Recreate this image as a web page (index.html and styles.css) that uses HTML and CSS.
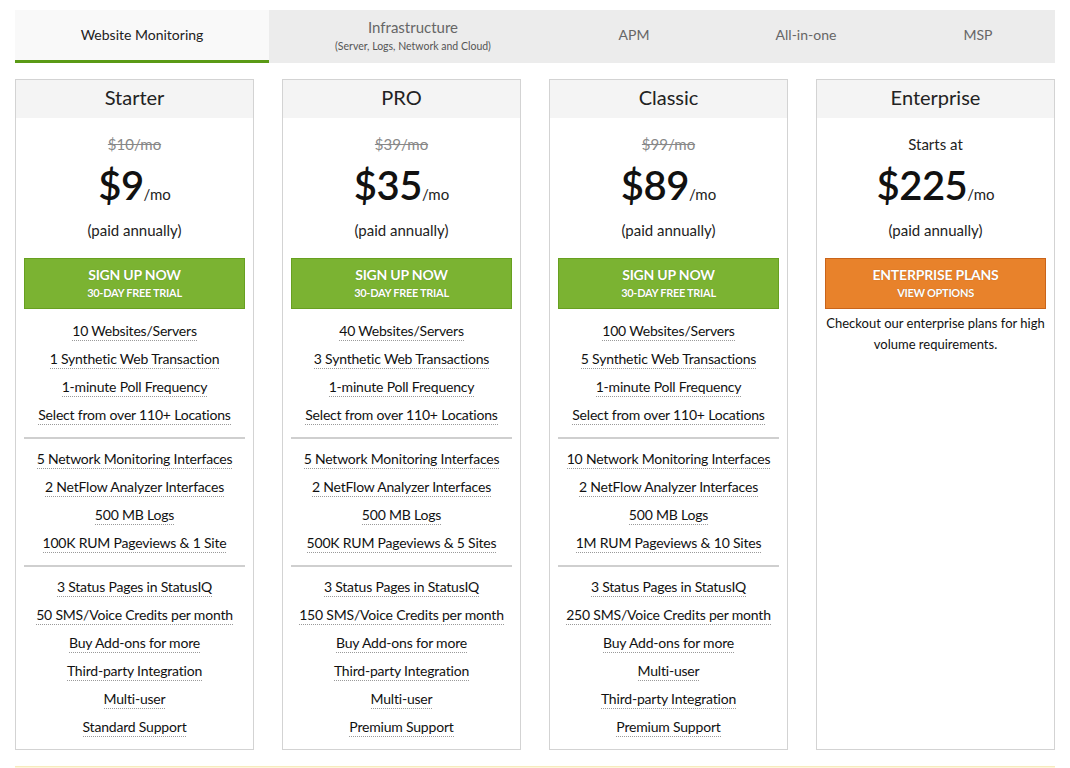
FILE: index.html
```html
<!DOCTYPE html>
<html>
<head>
<meta charset="utf-8">
<link rel="stylesheet" href="styles.css">
</head>
<body>
<div class="page">
  <nav class="tabs">
    <div class="tab active w1">Website Monitoring</div>
    <div class="tab w2"><span class="big">Infrastructure</span><small>(Server, Logs, Network and Cloud)</small></div>
    <div class="tab w3">APM</div>
    <div class="tab w4">All-in-one</div>
    <div class="tab w5">MSP</div>
  </nav>

  <div class="plans">
    <div class="card">
      <div class="card-head">Starter</div>
      <div class="card-body">
        <div class="old">$10/mo</div>
        <div class="price"><span class="amt">$9</span><span class="per">/mo</span></div>
        <div class="paid">(paid annually)</div>
        <a class="btn green"><b>SIGN UP NOW</b><span>30-DAY FREE TRIAL</span></a>
        <ul class="feats">
          <li><span>10 Websites/Servers</span></li>
          <li><span>1 Synthetic Web Transaction</span></li>
          <li><span>1-minute Poll Frequency</span></li>
          <li><span>Select from over 110+ Locations</span></li>
        </ul>
        <hr class="div">
        <ul class="feats">
          <li><span>5 Network Monitoring Interfaces</span></li>
          <li><span>2 NetFlow Analyzer Interfaces</span></li>
          <li><span>500 MB Logs</span></li>
          <li><span>100K RUM Pageviews &amp; 1 Site</span></li>
        </ul>
        <hr class="div">
        <ul class="feats">
          <li><span>3 Status Pages in StatusIQ</span></li>
          <li><span>50 SMS/Voice Credits per month</span></li>
          <li><span>Buy Add-ons for more</span></li>
          <li><span>Third-party Integration</span></li>
          <li><span class="plain">Multi-user</span></li>
          <li><span>Standard Support</span></li>
        </ul>
      </div>
    </div>

    <div class="card">
      <div class="card-head">PRO</div>
      <div class="card-body">
        <div class="old">$39/mo</div>
        <div class="price"><span class="amt">$35</span><span class="per">/mo</span></div>
        <div class="paid">(paid annually)</div>
        <a class="btn green"><b>SIGN UP NOW</b><span>30-DAY FREE TRIAL</span></a>
        <ul class="feats">
          <li><span>40 Websites/Servers</span></li>
          <li><span>3 Synthetic Web Transactions</span></li>
          <li><span>1-minute Poll Frequency</span></li>
          <li><span>Select from over 110+ Locations</span></li>
        </ul>
        <hr class="div">
        <ul class="feats">
          <li><span>5 Network Monitoring Interfaces</span></li>
          <li><span>2 NetFlow Analyzer Interfaces</span></li>
          <li><span>500 MB Logs</span></li>
          <li><span>500K RUM Pageviews &amp; 5 Sites</span></li>
        </ul>
        <hr class="div">
        <ul class="feats">
          <li><span>3 Status Pages in StatusIQ</span></li>
          <li><span>150 SMS/Voice Credits per month</span></li>
          <li><span>Buy Add-ons for more</span></li>
          <li><span>Third-party Integration</span></li>
          <li><span class="plain">Multi-user</span></li>
          <li><span>Premium Support</span></li>
        </ul>
      </div>
    </div>

    <div class="card">
      <div class="card-head">Classic</div>
      <div class="card-body">
        <div class="old">$99/mo</div>
        <div class="price"><span class="amt">$89</span><span class="per">/mo</span></div>
        <div class="paid">(paid annually)</div>
        <a class="btn green"><b>SIGN UP NOW</b><span>30-DAY FREE TRIAL</span></a>
        <ul class="feats">
          <li><span>100 Websites/Servers</span></li>
          <li><span>5 Synthetic Web Transactions</span></li>
          <li><span>1-minute Poll Frequency</span></li>
          <li><span>Select from over 110+ Locations</span></li>
        </ul>
        <hr class="div">
        <ul class="feats">
          <li><span>10 Network Monitoring Interfaces</span></li>
          <li><span>2 NetFlow Analyzer Interfaces</span></li>
          <li><span>500 MB Logs</span></li>
          <li><span>1M RUM Pageviews &amp; 10 Sites</span></li>
        </ul>
        <hr class="div">
        <ul class="feats">
          <li><span>3 Status Pages in StatusIQ</span></li>
          <li><span>250 SMS/Voice Credits per month</span></li>
          <li><span>Buy Add-ons for more</span></li>
          <li><span class="plain">Multi-user</span></li>
          <li><span>Third-party Integration</span></li>
          <li><span>Premium Support</span></li>
        </ul>
      </div>
    </div>

    <div class="card">
      <div class="card-head">Enterprise</div>
      <div class="card-body">
        <div class="starts">Starts at</div>
        <div class="price"><span class="amt">$225</span><span class="per">/mo</span></div>
        <div class="paid">(paid annually)</div>
        <a class="btn orange"><b>ENTERPRISE PLANS</b><span>VIEW OPTIONS</span></a>
        <p class="ent-note">Checkout our enterprise plans for high volume requirements.</p>
      </div>
    </div>
  </div>

  <div class="notice"></div>
</div>
</body>
</html>
```

FILE: styles.css
```css
* { box-sizing: border-box; }
html, body { margin: 0; padding: 0; background: #fff; }
body {
  font-family: Lato, "Open Sans", "Liberation Sans", sans-serif;
  color: #222;
}
.page { padding: 10px 15px 0; width: 1070px; overflow: hidden; height: 768px; }

.tabs {
  display: flex;
  height: 53px;
  background: #ececec;
}
.tab {
  display: flex;
  flex-direction: column;
  align-items: center;
  justify-content: center;
  font-size: 14px;
  color: #666;
  border-bottom: 3px solid transparent;
  line-height: 18px;
}
.tab .big { font-size: 15px; line-height: 20px; }
.tab small { font-size: 10.5px; line-height: 16px; color: #555; margin-top: 1px; }
.tab.active { background: #f9f9f9; color: #222; border-bottom-color: #5a9a16; }
.w1 { width: 254px; }
.w2 { width: 288px; }
.w3 { width: 154px; }
.w4 { width: 190px; }
.w5 { width: 154px; }

.plans {
  display: flex;
  gap: 28px;
  margin-top: 16px;
}
.card {
  width: 239px;
  height: 671px;
  border: 1px solid #d3d3d3;
  background: #fff;
}
.card-head {
  height: 38px;
  background: #f4f4f4;
  text-align: center;
  font-size: 20px;
  line-height: 35px;
  color: #222;
}
.card-body {
  padding: 0 8px;
  text-align: center;
}
.old, .starts {
  margin-top: 16px;
  font-size: 15px;
  line-height: 20px;
  color: #888;
  text-decoration: line-through;
}
.starts { color: #222; text-decoration: none; }
.price {
  margin-top: 10px;
  line-height: 42px;
  height: 44px;
}
.amt { font-size: 40px; color: #111; font-weight: 600; letter-spacing: -0.5px; }
.per { font-size: 15px; color: #222; }
.paid {
  margin-top: 12px;
  font-size: 15px;
  line-height: 20px;
}
.btn {
  display: flex;
  flex-direction: column;
  align-items: center;
  justify-content: center;
  margin-top: 18px;
  height: 51px;
  color: #fff;
  text-shadow: 0 0 1px rgba(0,0,0,0.25);
}
.btn b { font-size: 14px; line-height: 18px; font-weight: 700; letter-spacing: -0.2px; }
.btn span { font-size: 11px; line-height: 16px; font-weight: 700; margin-top: 1px; letter-spacing: -0.3px; }
.btn.green { background: #7bb332; border: 1px solid #67a020; }
.btn.orange { background: #e8822b; border: 1px solid #c9641a; }

.feats {
  list-style: none;
  margin: 0;
  padding: 0;
}
.card-body > .feats:first-of-type { margin-top: 8px; }
.feats li {
  height: 28px;
  line-height: 28px;
  font-size: 14px;
  color: #111;
  letter-spacing: -0.2px;
}
.feats li span {
  border-bottom: 1px dotted #9a9a9a;
  padding-bottom: 1px;
}
.div {
  border: 0;
  height: 2px;
  background: #cfcfcf;
  margin: 8px 0 6px;
}
.ent-note {
  margin: 4px 0 0;
  font-size: 13px;
  line-height: 21px;
  color: #111;
}
.notice {
  margin-top: 16px;
  height: 20px;
  background: #fdf6dc;
  border-top: 1px solid #f7ebbd;
}
```
